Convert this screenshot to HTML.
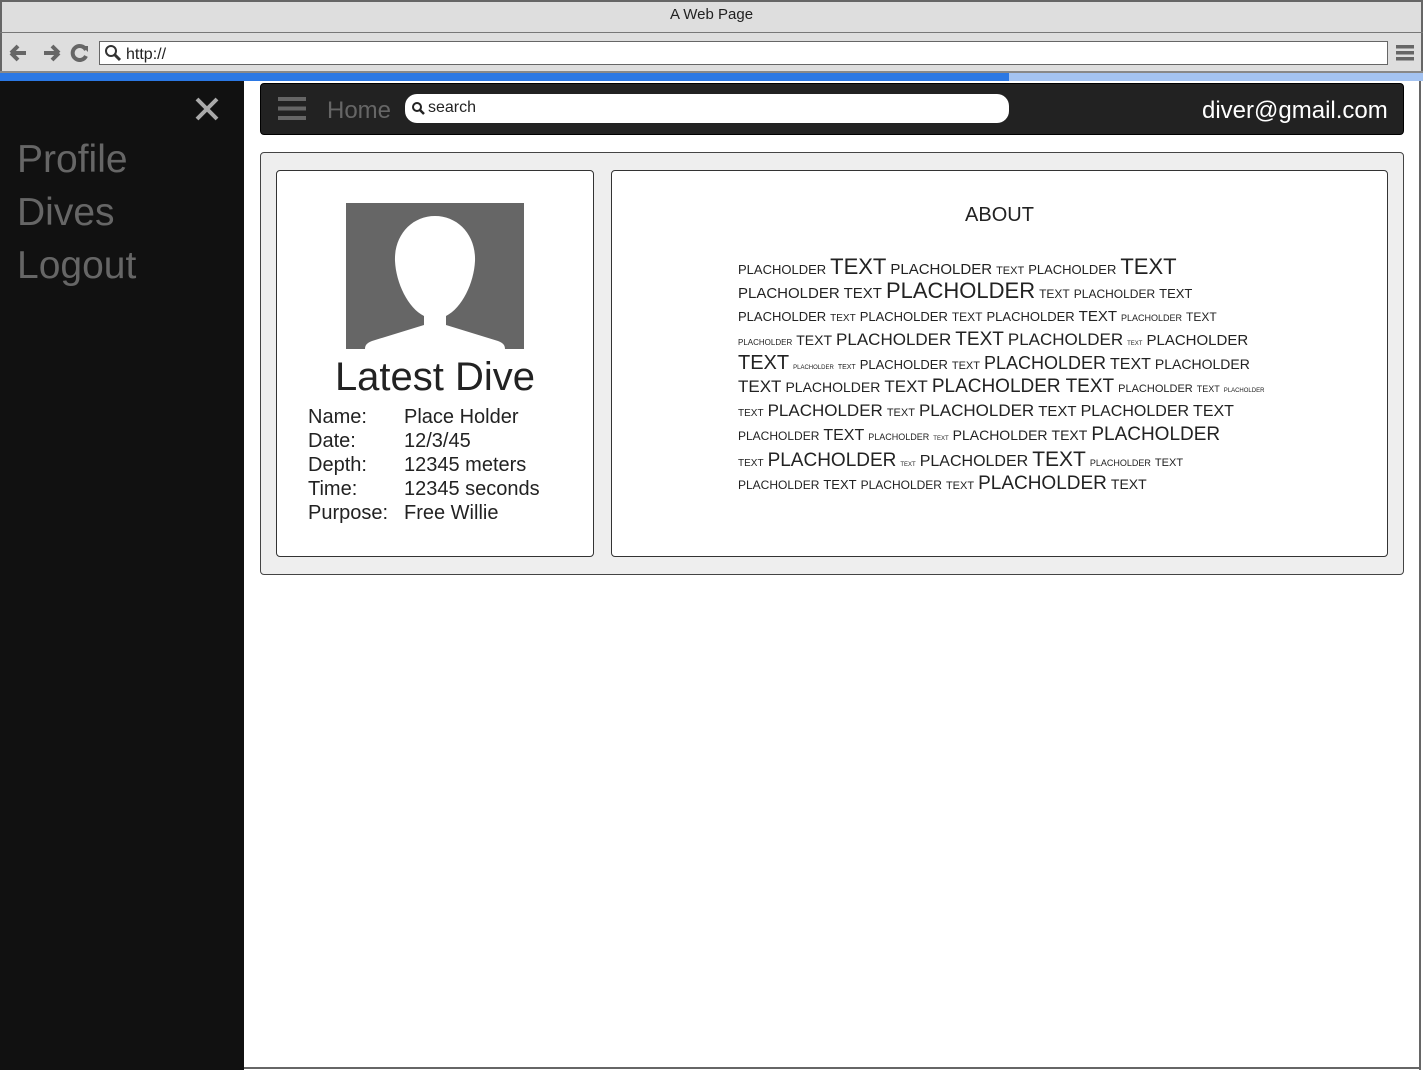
<!DOCTYPE html>
<html><head><meta charset="utf-8"><style>
*{margin:0;padding:0;box-sizing:border-box}
body{width:1423px;height:1070px;overflow:hidden;background:#fff;font-family:"Liberation Sans",Arial,sans-serif;position:relative}
.abs{position:absolute}
#chrome{left:0;top:0;width:1423px;height:73px;background:#dedede;border:2px solid #666;border-bottom:none}
#title{left:0;top:6px;width:1423px;text-align:center;font-size:15px;color:#222}
#tline{left:0;top:32px;width:1423px;height:1px;background:#777}
#url{left:99px;top:41px;width:1289px;height:24px;background:#fff;border:1px solid #666;font-size:16px;color:#222;padding:4px 0 0 26px}
#bline{left:0;top:71px;width:1423px;height:2px;background:#888}
#prog{left:0;top:73px;width:1009px;height:8px;background:#2b78e4}
#prog2{left:1009px;top:73px;width:414px;height:8px;background:#a4c3f1}
#side{left:0;top:81px;width:244px;height:989px;background:#111}
.nav{left:17px;font-size:39px;color:#666}
#frameR{left:1419px;top:81px;width:2px;height:989px;background:#666}
#frameB{left:244px;top:1067px;width:1177px;height:2px;background:#666}
#bar{left:260px;top:83px;width:1144px;height:52px;background:#222;border:1px solid #000;border-radius:4px}
#srch{left:405px;top:94px;width:604px;height:29px;background:#fff;border-radius:12px;font-size:16px;color:#222;padding:5px 0 0 23px}
#outer{left:260px;top:152px;width:1144px;height:423px;background:#eee;border:1.5px solid #444;border-radius:4px}
.card{background:#fff;border:1.5px solid #333;border-radius:4px}
#c1{left:276px;top:170px;width:318px;height:387px}
#c2{left:611px;top:170px;width:777px;height:387px}
.lbl{font-size:20px;color:#222;line-height:24px}
.wl{position:absolute;left:738px;white-space:nowrap;color:#222;line-height:1}
.wl span{margin-right:4px}
</style></head><body>
<div class="abs" id="chrome"></div>
<div class="abs" id="title">A Web Page</div>
<div class="abs" id="tline"></div>
<svg class="abs" style="left:8px;top:42px" width="80" height="22" viewBox="0 0 80 22">
<path d="M3 11 L10 4 M3 11 L10 18 M3 11 H18" stroke="#666" stroke-width="4" fill="none"/>
<path d="M51 11 L44 4 M51 11 L44 18 M51 11 H36" stroke="#666" stroke-width="4" fill="none"/>
<path d="M78 8 A7 7 0 1 0 78 14" stroke="#666" stroke-width="4" fill="none"/><path d="M74 4 L80 4 L80 10Z" fill="#666"/>
</svg>
<div class="abs" id="url">http://</div>
<svg class="abs" style="left:104px;top:44px" width="18" height="18"><circle cx="7" cy="7" r="5" stroke="#333" stroke-width="2" fill="none"/><path d="M10.5 10.5 L16 16" stroke="#333" stroke-width="3"/></svg>
<svg class="abs" style="left:1396px;top:44px" width="18" height="18"><rect x="0" y="1" width="18" height="3.5" fill="#666"/><rect x="0" y="7" width="18" height="3.5" fill="#666"/><rect x="0" y="13" width="18" height="3.5" fill="#666"/></svg>
<div class="abs" id="bline"></div>
<div class="abs" id="prog"></div><div class="abs" id="prog2"></div>
<div class="abs" id="side"></div>
<svg class="abs" style="left:194px;top:96px" width="26" height="26"><path d="M3 3 L23 23 M23 3 L3 23" stroke="#aaa" stroke-width="4"/></svg>
<div class="abs nav" style="top:138px">Profile</div>
<div class="abs nav" style="top:191px">Dives</div>
<div class="abs nav" style="top:244px">Logout</div>
<div class="abs" id="frameR"></div><div class="abs" id="frameB"></div>
<div class="abs" id="bar"></div>
<svg class="abs" style="left:278px;top:97px" width="28" height="24"><rect y="0" width="28" height="4" fill="#666"/><rect y="9.5" width="28" height="4" fill="#666"/><rect y="19" width="28" height="4" fill="#666"/></svg>
<div class="abs" style="left:327px;top:97px;font-size:24px;color:#666">Home</div>
<div class="abs" id="srch">search</div>
<svg class="abs" style="left:411px;top:101px" width="14" height="14"><circle cx="6" cy="6" r="4" stroke="#222" stroke-width="2" fill="none"/><path d="M9 9 L13 13" stroke="#222" stroke-width="2.5"/></svg>
<div class="abs" style="left:1202px;top:97px;font-size:24px;color:#fff">diver@gmail.com</div>
<div class="abs" id="outer"></div>
<div class="abs card" id="c1"></div>
<div class="abs card" id="c2"></div>
<svg class="abs" style="left:346px;top:203px" width="178" height="146" viewBox="0 0 178 146">
<rect width="178" height="146" fill="#666"/>
<path d="M89 13 C66 13 48 32 49 58 C50 80 62 105 78 113 L78 122 L26 138 C21 140 19 142 19 146 L159 146 C159 142 157 140 152 138 L100 122 L100 113 C116 105 128 80 129 58 C130 32 112 13 89 13Z" fill="#fff"/>
</svg>
<div class="abs" style="left:276px;top:355px;width:318px;text-align:center;font-size:40px;color:#222">Latest Dive</div>
<div class="abs lbl" style="left:308px;top:405px">Name:<br>Date:<br>Depth:<br>Time:<br>Purpose:</div>
<div class="abs lbl" style="left:404px;top:405px">Place Holder<br>12/3/45<br>12345 meters<br>12345 seconds<br>Free Willie</div>
<div class="abs" style="left:611px;top:204px;width:777px;text-align:center;font-size:20px;color:#222">ABOUT</div>

<div class="wl" style="top:256px"><span style="font-size:13px">PLACHOLDER</span><span style="font-size:22px">TEXT</span><span style="font-size:15px">PLACHOLDER</span><span style="font-size:11px">TEXT</span><span style="font-size:13px">PLACHOLDER</span><span style="font-size:22px">TEXT</span></div>
<div class="wl" style="top:280px"><span style="font-size:15px">PLACHOLDER TEXT</span><span style="font-size:22px">PLACHOLDER</span><span style="font-size:12px">TEXT</span><span style="font-size:12px">PLACHOLDER</span><span style="font-size:13px">TEXT</span></div>
<div class="wl" style="top:309px"><span style="font-size:13px">PLACHOLDER</span><span style="font-size:10px">TEXT</span><span style="font-size:13px">PLACHOLDER</span><span style="font-size:12px">TEXT</span><span style="font-size:13px">PLACHOLDER</span><span style="font-size:15px">TEXT</span><span style="font-size:9px">PLACHOLDER</span><span style="font-size:12px">TEXT</span></div>
<div class="wl" style="top:330px"><span style="font-size:8px">PLACHOLDER</span><span style="font-size:14px">TEXT</span><span style="font-size:17px">PLACHOLDER</span><span style="font-size:19px">TEXT</span><span style="font-size:17px">PLACHOLDER</span><span style="font-size:6px">TEXT</span><span style="font-size:15px">PLACHOLDER</span></div>
<div class="wl" style="top:353px"><span style="font-size:20px">TEXT</span><span style="font-size:6px">PLACHOLDER</span><span style="font-size:7px">TEXT</span><span style="font-size:13px">PLACHOLDER</span><span style="font-size:11px">TEXT</span><span style="font-size:18px">PLACHOLDER</span><span style="font-size:16px">TEXT</span><span style="font-size:14px">PLACHOLDER</span></div>
<div class="wl" style="top:377px"><span style="font-size:17px">TEXT</span><span style="font-size:14px">PLACHOLDER</span><span style="font-size:17px">TEXT</span><span style="font-size:19px">PLACHOLDER TEXT</span><span style="font-size:11px">PLACHOLDER</span><span style="font-size:9px">TEXT</span><span style="font-size:6px">PLACHOLDER</span></div>
<div class="wl" style="top:402px"><span style="font-size:10px">TEXT</span><span style="font-size:17px">PLACHOLDER</span><span style="font-size:11px">TEXT</span><span style="font-size:17px">PLACHOLDER</span><span style="font-size:15px">TEXT</span><span style="font-size:16px">PLACHOLDER</span><span style="font-size:16px">TEXT</span></div>
<div class="wl" style="top:425px"><span style="font-size:12px">PLACHOLDER</span><span style="font-size:16px">TEXT</span><span style="font-size:9px">PLACHOLDER</span><span style="font-size:6px">TEXT</span><span style="font-size:14px">PLACHOLDER</span><span style="font-size:14px">TEXT</span><span style="font-size:19px">PLACHOLDER</span></div>
<div class="wl" style="top:449px"><span style="font-size:10px">TEXT</span><span style="font-size:19px">PLACHOLDER</span><span style="font-size:6px">TEXT</span><span style="font-size:16px">PLACHOLDER</span><span style="font-size:21px">TEXT</span><span style="font-size:9px">PLACHOLDER</span><span style="font-size:11px">TEXT</span></div>
<div class="wl" style="top:474px"><span style="font-size:12px">PLACHOLDER</span><span style="font-size:13px">TEXT</span><span style="font-size:12px">PLACHOLDER</span><span style="font-size:11px">TEXT</span><span style="font-size:19px">PLACHOLDER</span><span style="font-size:14px">TEXT</span></div>
</body></html>
